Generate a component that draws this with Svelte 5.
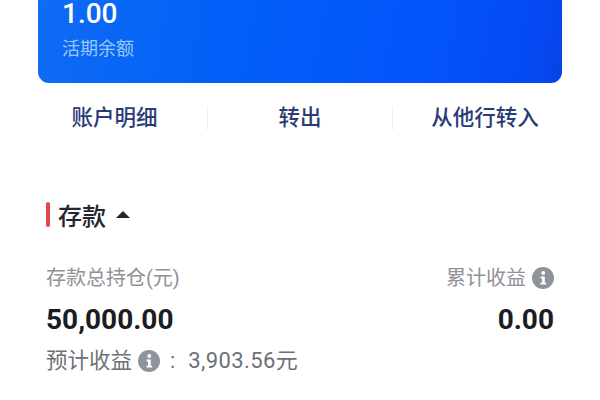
<script>
    const actions = ["账户明细", "转出", "从他行转入"];
</script>

{#snippet info()}
    <svg class="info" viewBox="0 0 22 22" aria-hidden="true">
        <circle cx="11" cy="11" r="11" fill="#8f939b" />
        <circle cx="11.3" cy="6" r="1.9" fill="#fff" />
        <path d="M8.6 9.6h4.2v6.2h1.4v1.8H8.4v-1.8h1.6v-4.4H8.6z" fill="#fff" />
    </svg>
{/snippet}

<main class="page">
    <section class="card">
        <div class="amount">1.00</div>
        <div class="card-label">活期余额</div>
    </section>

    <nav class="actions">
        {#each actions as action}
            <span class="action">{action}</span>
        {/each}
    </nav>

    <section class="deposit">
        <h2 class="title">
            <span class="mark"></span>存款<span class="caret"></span>
        </h2>
        <div class="row labels">
            <span>存款总持仓(元)</span>
            <span class="with-icon">累计收益 {@render info()}</span>
        </div>
        <div class="row values">
            <span>50,000.00</span>
            <span>0.00</span>
        </div>
        <div class="expected">
            预计收益 {@render info()}<span class="colon">:</span><span class="money">3,903.56元</span>
        </div>
    </section>
</main>

<style>
    :global(body) {
        margin: 0;
        background: #fff;
    }

    .page {
        width: 600px;
        height: 400px;
        overflow: hidden;
        font-family: Roboto, "Noto Sans CJK SC", sans-serif;
    }

    .card {
        box-sizing: border-box;
        height: 83px;
        margin: 0 38px;
        padding: 1px 0 0 24px;
        border-radius: 0 0 11px 11px;
        background: linear-gradient(100deg, #0f6cf4 0%, #0260f8 35%, #0353fb 75%, #0549f2 95%, #0642e2 100%);
        color: #fff;
    }

    .amount {
        font-size: 28px;
        font-weight: 500;
        line-height: 26px;
    }

    .card-label {
        margin-top: 9px;
        font-size: 18px;
        line-height: 26px;
        color: #9cc6fb;
    }

    .actions {
        display: grid;
        grid-template-columns: repeat(3, 185px);
        align-items: center;
        height: 70px;
        margin: 0 22px;
        color: #2a3b75;
        font-size: 21.5px;
        font-weight: 500;
    }

    .action {
        line-height: 24px;
        text-align: center;
        border-left: 1px solid #eeeff2;
    }

    .action:first-child {
        border-left: none;
    }

    .deposit {
        padding: 46px 46px 0;
    }

    .title {
        display: flex;
        align-items: center;
        margin: 0;
        height: 30px;
        font-size: 24px;
        font-weight: 500;
        color: #23262d;
    }

    .mark {
        width: 4px;
        height: 25px;
        margin-right: 8px;
        border-radius: 2px;
        background: #e5484a;
    }

    .caret {
        width: 0;
        height: 0;
        margin-left: 10px;
        border-left: 7px solid transparent;
        border-right: 7px solid transparent;
        border-bottom: 7px solid #23262d;
    }

    .row {
        display: flex;
        justify-content: space-between;
    }

    .labels {
        margin-top: 35px;
        font-size: 20px;
        line-height: 28px;
        color: #8f9298;
    }

    .with-icon {
        display: flex;
        align-items: center;
        gap: 6px;
    }

    .info {
        width: 22px;
        height: 22px;
        flex: none;
    }

    .values {
        margin-top: 12px;
        font-size: 28px;
        font-weight: 700;
        line-height: 32px;
        color: #1b1d22;
    }

    .expected {
        display: flex;
        align-items: center;
        gap: 6px;
        margin-top: 11px;
        font-size: 21.5px;
        line-height: 28px;
        color: #6d7077;
    }

    .colon {
        margin: 0 7px 0 4px;
    }

    .money {
        font-size: 22px;
        letter-spacing: 0.4px;
    }
</style>
